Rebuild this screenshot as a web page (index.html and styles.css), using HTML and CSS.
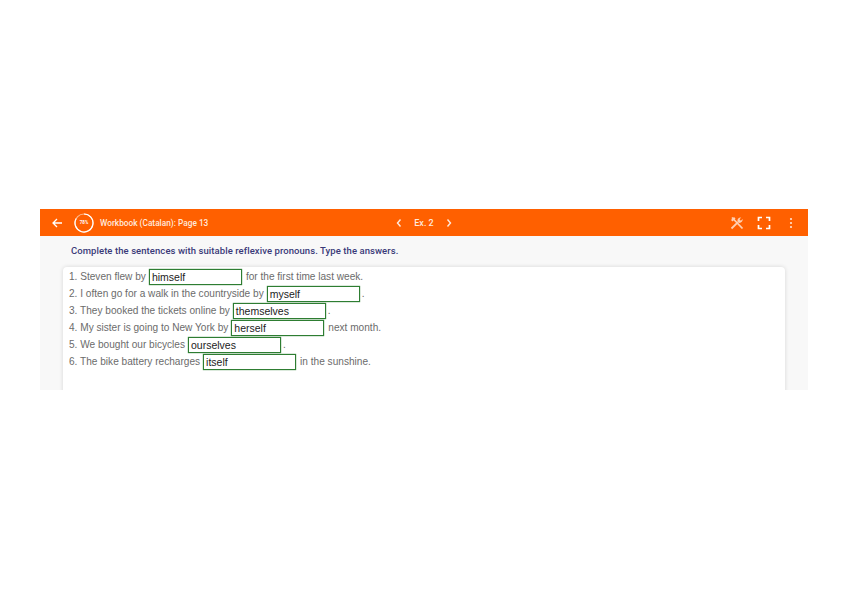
FILE: index.html
```html
<!DOCTYPE html>
<html lang="en">
<head>
<meta charset="utf-8">
<title>Workbook (Catalan): Page 13</title>
<link rel="stylesheet" href="styles.css">
</head>
<body>
<main class="app">
  <header class="bar">
    <div class="bar-left">
      <svg class="back" viewBox="0 0 12 12" width="12" height="12"><path d="M11 6H2M6 2L2 6l4 4" fill="none" stroke="#fff" stroke-width="1.3"/></svg>
      <div class="ring"><svg viewBox="0 0 20 20" width="20" height="20"><circle cx="10" cy="10" r="9" fill="none" stroke="#ffb98c" stroke-width="1.2"/><path d="M10 1A9 9 0 1 1 2.200 5.500" fill="none" stroke="#fff" stroke-width="1.2"/></svg><span class="pct">78%</span></div>
      <span class="title">Workbook (Catalan): Page 13</span>
    </div>
    <nav class="bar-mid">
      <svg viewBox="0 0 6 10" width="6" height="10"><path d="M4.500 1.500L1.500 5l3 3.500" fill="none" stroke="#ffe9dc" stroke-width="1.4"/></svg>
      <span class="ex">Ex. 2</span>
      <svg viewBox="0 0 6 10" width="6" height="10"><path d="M1.500 1.500L4.500 5l-3 3.500" fill="none" stroke="#ffe9dc" stroke-width="1.4"/></svg>
    </nav>
    <div class="bar-right">
      <svg viewBox="0 0 14 14" width="14" height="14"><path d="M2 1.500l10.500 11" fill="none" stroke="#ffd0b2" stroke-width="1.800"/><path d="M1.500 12.500L8 6.200" fill="none" stroke="#ffd0b2" stroke-width="1.800"/><path d="M7.500 5.500c-.5-2 1-4.200 3.700-4L9.500 3.200l1.300 1.500 1.900-1.600c.3 2.600-2 4.300-4 3.700z" fill="#ffd0b2"/><path d="M1 4l3-3 1.500 1.500-3 3z" fill="#ffd0b2"/></svg>
      <svg viewBox="0 0 14 14" width="14" height="14"><path d="M1.500 5V1.500H5M9 1.500h3.500V5M12.500 9v3.500H9M5 12.500H1.500V9" fill="none" stroke="#fff" stroke-width="1.700"/></svg>
      <svg class="dots" viewBox="0 0 4 14" width="4" height="14"><circle cx="2" cy="3" r="1.100" fill="#ffe3d0"/><circle cx="2" cy="7" r="1.100" fill="#ffe3d0"/><circle cx="2" cy="11" r="1.100" fill="#ffe3d0"/></svg>
    </div>
  </header>
  <section class="content">
    <p class="prompt">Complete the sentences with suitable reflexive pronouns. Type the answers.</p>
    <div class="card">
      <div class="line"><span>1. Steven flew by</span><span class="answer">himself</span><span class="tail">for the first time last week.</span></div>
      <div class="line"><span>2. I often go for a walk in the countryside by</span><span class="answer">myself</span><span class="stop">.</span></div>
      <div class="line"><span>3. They booked the tickets online by</span><span class="answer">themselves</span><span class="stop">.</span></div>
      <div class="line"><span>4. My sister is going to New York by</span><span class="answer">herself</span><span class="tail">next month.</span></div>
      <div class="line"><span>5. We bought our bicycles</span><span class="answer">ourselves</span><span class="stop">.</span></div>
      <div class="line"><span>6. The bike battery recharges</span><span class="answer">itself</span><span class="tail">in the sunshine.</span></div>
    </div>
  </section>
</main>
</body>
</html>
```
FILE: styles.css
```css
html, body { margin: 0; background: #fff; }
body { padding: 209px 40px 0; font-family: "Liberation Sans", Arial, sans-serif; overflow: hidden; }
.app { height: 181px; background: #f8f8f8; overflow: hidden; }
.bar { height: 27px; background: #ff6000; display: grid; grid-template-columns: 1fr auto 1fr; align-items: center; color: #fff; }
.bar-left { display: flex; align-items: center; padding-left: 11px; }
.back { margin-right: 11px; }
.ring { position: relative; width: 20px; height: 20px; margin-right: 6px; }
.ring svg { display: block; }
.pct { position: absolute; inset: 0; display: flex; align-items: center; justify-content: center; font: bold 4.500px "Roboto", sans-serif; }
.title { font: 500 8.300px "Roboto", sans-serif; color: #ffe9dc; }
.bar-mid { display: flex; align-items: center; gap: 12px; }
.ex { font: 500 9px "Roboto", sans-serif; color: #ffe9dc; }
.bar-right { display: flex; align-items: center; justify-content: flex-end; gap: 13px; padding-right: 15px; }
.dots { margin-left: 5px; }
.content { padding: 8px 23px 0; }
.prompt { margin: 0 0 9px 8px; font: 500 9.500px/14px "Roboto", sans-serif; letter-spacing: .07px; color: #3a3a78; }
.card { height: 140px; background: #fff; border-radius: 4px; box-shadow: 0 0 4px rgba(0,0,0,.14); padding: 1px 6px; }
.line { height: 17px; display: flex; align-items: center; font-size: 10.100px; color: #6b6b6b; white-space: pre; }
.answer { box-sizing: border-box; width: 93px; height: 16px; margin: 1px 0 0 3px; padding-left: 2px; border: 1px solid #2e7d32; box-shadow: 0 0 1px #2e7d32; background: #fff; color: #222; font-size: 10.500px; line-height: 15px; }
.tail { margin-left: 4px; }
.stop { margin-left: 2px; }
```
